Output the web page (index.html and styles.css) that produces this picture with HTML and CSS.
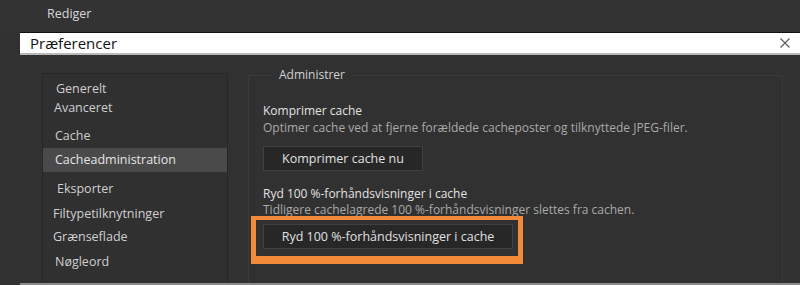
FILE: index.html
```html
<!DOCTYPE html>
<html lang="da">
<head>
    <meta charset="UTF-8">
    <title>Præferencer</title>
    <link rel="stylesheet" href="styles.css">
</head>
<body>
<div class="topbar"><span class="menuTitle">Rediger</span></div>
<div class="dialog">
    <div class="titlebar">
        <span class="titleText">Præferencer</span>
        <svg class="close" width="10" height="10" viewBox="0 0 10 10">
            <path d="M0.5 0.5 L9.5 9.5 M9.5 0.5 L0.5 9.5" stroke="#5a5a5a" stroke-width="1.1" fill="none"/>
        </svg>
    </div>
    <div class="content">
        <!--venstre liste med kategorier-->
        <ul class="nav">
            <li class="g1">Generelt</li>
            <li class="g2">Avanceret</li>
            <li class="g3">Cache</li>
            <li class="g4 active">Cacheadministration</li>
            <li class="g5">Eksporter</li>
            <li class="g6">Filtypetilknytninger</li>
            <li class="g7">Grænseflade</li>
            <li class="g8">Nøgleord</li>
        </ul>
        <fieldset class="panel">
            <legend>Administrer</legend>
            <div class="section">
                <p class="label">Komprimer cache</p>
                <p class="desc">Optimer cache ved at fjerne forældede cacheposter og tilknyttede JPEG-filer.</p>
                <button class="btn btnSmall">Komprimer cache nu</button>
            </div>
            <div class="section">
                <p class="label">Ryd 100 %-forhåndsvisninger i cache</p>
                <p class="desc">Tidligere cachelagrede 100 %-forhåndsvisninger slettes fra cachen.</p>
                <div class="highlight">
                    <button class="btn btnWide">Ryd 100 %-forhåndsvisninger i cache</button>
                </div>
            </div>
        </fieldset>
    </div>
</div>
</body>
</html>
```

FILE: styles.css
```css
* {
    margin: 0;
    padding: 0;
    box-sizing: border-box;
}
html, body {
    height: 285px;
    overflow: hidden;
}
body {
    background: #313131;
    font-family: "Open Sans", "DejaVu Sans", sans-serif;
    font-size: 12px;
    color: #d6d6d6;
}
ul, li {
    list-style: none;
}
.topbar {
    height: 32px;
    padding-left: 47px;
    line-height: 28px;
    background: #333333;
}
.menuTitle {
    font-size: 12.5px;
    color: #d8d8d8;
}
.dialog {
    margin-left: 20px;
    height: 253px;
    border-bottom: 2px solid #8a8a8a;
}
.titlebar {
    display: flex;
    justify-content: space-between;
    align-items: center;
    height: 23px;
    background: #ffffff;
    border-top: 1px solid #111111;
    border-bottom: 2px solid #b9b9b9;
    padding: 0 10px 0 10px;
}
.titleText {
    font-size: 15px;
    color: #111111;
}
.close {
    display: block;
}
.content {
    display: flex;
    padding: 18px 17px 0 22px;
    height: 228px;
}
/*左侧分类列表*/
.nav {
    width: 186px;
    height: 100%;
    border: 1px solid #272727;
    border-bottom: none;
    background: #303030;
    padding-top: 4px;
}
.nav li {
    height: 24px;
    line-height: 24px;
    padding-left: 12px;
    font-size: 12.5px;
    color: #cfcfcf;
    white-space: nowrap;
}
.nav .g1 { height: 20px; line-height: 22px; padding-left: 13px; }
.nav .g2 { height: 24px; line-height: 20px; padding-left: 11px; }
.nav .g3 { height: 26px; line-height: 28px; }
.nav .g4 { line-height: 24px; }
.nav .g5 { height: 28px; line-height: 34px; padding-left: 14px; }
.nav .g6 { line-height: 28px; padding-left: 10px; }
.nav .g7 { line-height: 26px; padding-left: 10px; }
.nav .g8 { line-height: 28px; }
.nav li.active {
    background: #4a4a4a;
    color: #e4e4e4;
}
/*右侧设置区域*/
.panel {
    flex: 1;
    margin-left: 20px;
    height: 100%;
    border: 1px solid #3a3a3a;
    border-bottom: none;
    padding: 0 14px;
    min-width: 0;
}
.panel legend {
    margin-left: 9px;
    padding: 0 6px 0 7px;
    font-size: 12px;
    color: #d2d2d2;
    line-height: 4px;
}
.section {
    padding-top: 25px;
}
.section + .section {
    padding-top: 14px;
}
.label {
    line-height: 17px;
    color: #e2e2e2;
}
.desc {
    line-height: 17px;
    color: #a9a9a9;
}
.section + .section .desc {
    line-height: 16px;
}
.btn {
    display: block;
    height: 25px;
    border: 1px solid #404040;
    background: #272727;
    color: #e0e0e0;
    font-family: inherit;
    font-size: 12.5px;
}
.btnSmall {
    width: 160px;
    margin-top: 10px;
}
.btnWide {
    width: 250px;
}
/*橙色标注框*/
.highlight {
    display: inline-block;
    margin: -2px 0 0 -12px;
    padding: 4px 5px 7px 7px;
    border-style: solid;
    border-color: #f38a3a;
    border-width: 4px 5px 8px 5px;
}
```
